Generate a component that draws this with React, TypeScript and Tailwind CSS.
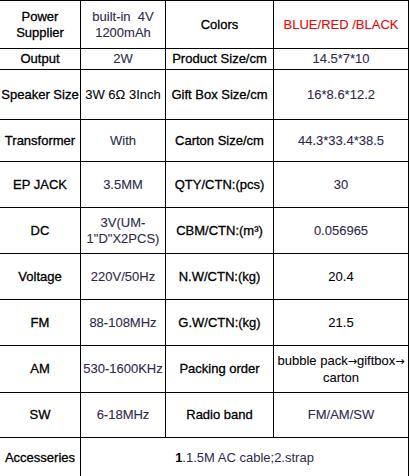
const rows: [string, React.ReactNode, string, React.ReactNode][] = [
  ["Power Supplier", <>built-in&nbsp; 4V<br />1200mAh</>, "Colors", <span className="text-[#ff0000]">BLUE/RED /BLACK</span>],
  ["Output", "2W", "Product Size/cm", "14.5*7*10"],
  ["Speaker Size", <span className="text-black">3W 6Ω 3Inch</span>, "Gift Box Size/cm", "16*8.6*12.2"],
  ["Transformer", "With", "Carton Size/cm", "44.3*33.4*38.5"],
  ["EP JACK", "3.5MM", "QTY/CTN:(pcs)", "30"],
  ["DC", <>3V(UM-<br />1"D"X2PCS)</>, "CBM/CTN:(m³)", "0.056965"],
  ["Voltage", "220V/50Hz", "N.W/CTN:(kg)", <span className="text-black">20.4</span>],
  ["FM", "88-108MHz", "G.W/CTN:(kg)", <span className="text-black">21.5</span>],
  [
    "AM",
    "530-1600KHz",
    "Packing order",
    <span className="text-black">
      bubble pack<span className="font-['DejaVu_Sans'] text-[11px]">→</span>giftbox
      <span className="font-['DejaVu_Sans'] text-[11px]">→</span>
      <br />
      carton
    </span>,
  ],
  ["SW", "6-18MHz", "Radio band", "FM/AM/SW"],
];

function Cell({ children, label }: { children: React.ReactNode; label?: boolean }) {
  return (
    <div
      className={
        "flex items-center justify-center whitespace-nowrap bg-white text-center leading-4 " +
        (label ? "text-black [-webkit-text-stroke:0.3px_black]" : "text-[#2f2b4a] [-webkit-text-stroke:0.1px_#2f2b4a]")
      }
    >
      <div>{children}</div>
    </div>
  );
}

export default function App() {
  return (
    <div className="h-[476px] w-[411px] overflow-hidden bg-white font-['Liberation_Sans',Arial,sans-serif] text-[13px]">
      <div className="grid w-[409px] grid-cols-[80px_84px_107px_134px] grid-rows-[47px_20px_49px_41px_45px_45px_45px_45px_46px_44px_40px] gap-px bg-black pt-px pr-px">
        {rows.map(([a, b, c, d], i) => (
          <div key={i} className="contents">
            <Cell label>{a === "Power Supplier" ? <>Power<br />Supplier</> : a}</Cell>
            <Cell>{b}</Cell>
            <Cell label>{c}</Cell>
            <Cell>{d}</Cell>
          </div>
        ))}
        <Cell label>Accesseries</Cell>
        <div className="col-span-3 flex items-center justify-center bg-white text-[#2f2b4a]">
          <span>
            <span className="font-bold text-black">1</span>.1.5M AC cable;2.strap
          </span>
        </div>
      </div>
    </div>
  );
}
